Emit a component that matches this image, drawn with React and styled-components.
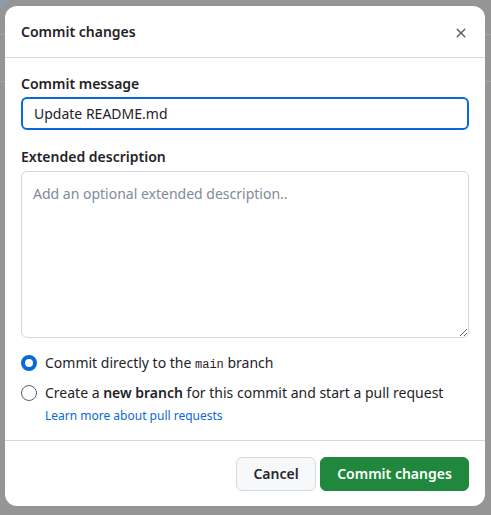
import React from "react";
import styled, { createGlobalStyle } from "styled-components";

const Global = createGlobalStyle`
  html, body { margin: 0; padding: 0; }
  body {
    width: 491px;
    height: 515px;
    overflow: hidden;
    background: #959595;
    font-family: "Noto Sans", "Liberation Sans", sans-serif;
    color: #1f2328;
  }
`;

const Backdrop = styled.div`
  width: 491px;
  height: 515px;
  background:
    linear-gradient(#a3a3a3, #a3a3a3) 0 34px / 100% 1px no-repeat,
    linear-gradient(#a3a3a3, #a3a3a3) 0 81px / 100% 1px no-repeat,
    radial-gradient(circle at 0 0, #8f9ba8 0 8px, transparent 9px),
    #959595;
  display: flex;
  align-items: flex-start;
  padding: 6px 0 0 5px;
  box-sizing: border-box;
`;

const Dialog = styled.div`
  width: 480px;
  height: 500px;
  background: #ffffff;
  border-radius: 12px;
  display: flex;
  flex-direction: column;
  overflow: hidden;
`;

const Header = styled.div`
  flex: none;
  height: 52px;
  box-sizing: border-box;
  border-bottom: 1px solid #d1d9e0;
  display: flex;
  align-items: center;
  justify-content: space-between;
  padding: 0 16px;
`;

const Title = styled.h1`
  margin: 0;
  font-size: 14px;
  font-weight: 600;
  line-height: 20px;
  color: #1f2328;
`;

const CloseButton = styled.button`
  width: 32px;
  height: 32px;
  border: 0;
  background: transparent;
  display: flex;
  align-items: center;
  justify-content: center;
  padding: 0;
  margin-right: -8px;
  margin-top: 3px;
  color: #59636e;
`;

const Body = styled.div`
  flex: none;
  padding: 16px 16px 15px;
  display: flex;
  flex-direction: column;
  border-bottom: 1px solid #d1d9e0;
`;

const Label = styled.label`
  display: block;
  font-size: 14px;
  font-weight: 600;
  line-height: 20px;
  margin-bottom: ${(p) => p.$gap}px;
`;

const Field = styled.div`
  margin-bottom: ${(p) => p.$mb || 0}px;
`;

const TextInput = styled.input`
  display: block;
  width: 100%;
  box-sizing: border-box;
  height: 33px;
  border: 2px solid #0969da;
  border-radius: 6px;
  padding: 0 11px;
  font-family: inherit;
  font-size: 14px;
  color: #1f2328;
  outline: none;
  background: #fff;
`;

const TextArea = styled.textarea`
  display: block;
  width: 100%;
  box-sizing: border-box;
  height: 167px;
  border: 1px solid #d1d9e0;
  border-radius: 6px;
  padding: 12px 11px;
  font-family: inherit;
  font-size: 14px;
  line-height: 20px;
  color: #1f2328;
  resize: vertical;
  outline: none;
  &::placeholder { color: #818b98; }
`;

const Options = styled.div`
  display: flex;
  flex-direction: column;
  gap: 8px;
`;

const Option = styled.div`
  display: flex;
  align-items: flex-start;
  gap: 8px;
`;

const Radio = styled.span`
  flex: none;
  width: 16px;
  height: 16px;
  margin-top: 2px;
  box-sizing: border-box;
  border-radius: 50%;
  border: ${(p) => (p.$checked ? "4px solid #0969da" : "1px solid #59636e")};
  background: #fff;
`;

const OptionText = styled.div`
  font-size: 14px;
  line-height: 20px;
  color: #1f2328;
  strong { font-weight: 600; }
`;

const Code = styled.code`
  font-family: "Liberation Mono", "DejaVu Sans Mono", monospace;
  font-size: 12px;
`;

const Link = styled.a`
  display: block;
  font-size: 12px;
  line-height: 18px;
  color: #0969da;
  text-decoration: none;
  margin-top: 4px;
`;

const Footer = styled.div`
  flex: 1;
  display: flex;
  justify-content: flex-end;
  align-items: flex-start;
  gap: 4px;
  padding: 16px;
`;

const Button = styled.button`
  height: 34px;
  padding: 0 16px;
  border-radius: 6px;
  font-family: inherit;
  font-size: 14px;
  font-weight: 600;
  line-height: 20px;
  border: 1px solid ${(p) => (p.$primary ? "#1f883d" : "#d1d9e0")};
  background: ${(p) => (p.$primary ? "#1f883d" : "#f6f8fa")};
  color: ${(p) => (p.$primary ? "#ffffff" : "#25292e")};
  min-width: ${(p) => p.$w || 0}px;
`;

export default function App() {
  return (
    <>
      <Global />
      <Backdrop>
        <Dialog>
          <Header>
            <Title>Commit changes</Title>
            <CloseButton aria-label="Close">
              <svg width="16" height="16" viewBox="0 0 16 16" fill="currentColor">
                <path d="M3.72 3.72a.75.75 0 0 1 1.06 0L8 6.94l3.22-3.22a.749.749 0 0 1 1.275.326.749.749 0 0 1-.215.734L9.06 8l3.22 3.22a.749.749 0 0 1-.326 1.275.749.749 0 0 1-.734-.215L8 9.06l-3.22 3.22a.751.751 0 0 1-1.042-.018.751.751 0 0 1-.018-1.042L6.94 8 3.72 4.78a.75.75 0 0 1 0-1.06Z" />
              </svg>
            </CloseButton>
          </Header>
          <Body>
            <Field $mb={17}>
              <Label $gap={3}>Commit message</Label>
              <TextInput defaultValue="Update README.md" />
            </Field>
            <Field $mb={15}>
              <Label $gap={4}>Extended description</Label>
              <TextArea placeholder="Add an optional extended description.." />
            </Field>
            <Options>
              <Option>
                <Radio $checked />
                <OptionText>
                  Commit directly to the <Code>main</Code> branch
                </OptionText>
              </Option>
              <Option>
                <Radio />
                <OptionText>
                  Create a <strong>new branch</strong> for this commit and start a pull request
                  <Link href="#">Learn more about pull requests</Link>
                </OptionText>
              </Option>
            </Options>
          </Body>
          <Footer>
            <Button $w={80}>Cancel</Button>
            <Button $primary $w={149}>Commit changes</Button>
          </Footer>
        </Dialog>
      </Backdrop>
    </>
  );
}
